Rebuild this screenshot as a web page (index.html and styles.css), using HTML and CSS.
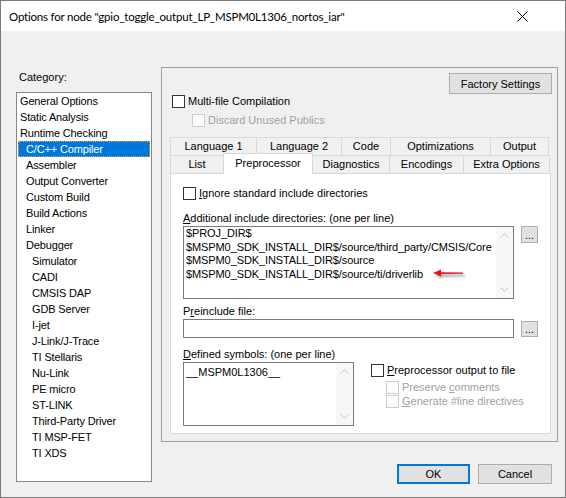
FILE: index.html
```html
<!DOCTYPE html>
<html>
<head>
    <title>Options for node</title>
    <link rel="stylesheet" href="styles.css">
</head>
<body>

<div class="window">
    <div class="titlebar">
        <span class="title">Options for node "gpio_toggle_output_LP_MSPM0L1306_nortos_iar"</span>
        <svg class="close" width="11" height="11" viewBox="0 0 11 11">
            <path d="M0.5 0.5 L10.5 10.5 M10.5 0.5 L0.5 10.5" stroke="#000" stroke-width="1" fill="none"/>
        </svg>
    </div>

    <div class="client">

        <div class="category">
            <div class="cat-label">Category:</div>
            <ul class="listbox">
                <li class="l0">General Options</li>
                <li class="l0">Static Analysis</li>
                <li class="l0">Runtime Checking</li>
                <li class="l1 selected">C/C++ Compiler</li>
                <li class="l1">Assembler</li>
                <li class="l1">Output Converter</li>
                <li class="l1">Custom Build</li>
                <li class="l1">Build Actions</li>
                <li class="l1">Linker</li>
                <li class="l1">Debugger</li>
                <li class="l2">Simulator</li>
                <li class="l2">CADI</li>
                <li class="l2">CMSIS DAP</li>
                <li class="l2">GDB Server</li>
                <li class="l2">I-jet</li>
                <li class="l2">J-Link/J-Trace</li>
                <li class="l2">TI Stellaris</li>
                <li class="l2">Nu-Link</li>
                <li class="l2">PE micro</li>
                <li class="l2">ST-LINK</li>
                <li class="l2">Third-Party Driver</li>
                <li class="l2">TI MSP-FET</li>
                <li class="l2">TI XDS</li>
            </ul>
        </div>

        <div class="right">
            <div class="panel">
                <div class="panel-top">
                    <button class="btn factory">Factory Settings</button>
                </div>

                <div class="check multi"><span class="box"></span>Multi-file Compilation</div>
                <div class="check disabled discard"><span class="box"></span>Discard Unused Publics</div>

                <div class="tabrow back">
                    <div class="tab w-lang1">Language 1</div>
                    <div class="tab w-lang2">Language 2</div>
                    <div class="tab w-code">Code</div>
                    <div class="tab w-opt">Optimizations</div>
                    <div class="tab w-out last">Output</div>
                </div>
                <div class="tabrow front">
                    <div class="tab w-list">List</div>
                    <div class="tab w-pre active">Preprocessor</div>
                    <div class="tab w-diag noleft">Diagnostics</div>
                    <div class="tab w-enc">Encodings</div>
                    <div class="tab w-extra last">Extra Options</div>
                </div>

                <div class="tabpage">
                    <div class="check ignore"><span class="box"></span><span><u>I</u>gnore standard include directories</span></div>

                    <div class="lbl first"><u>A</u>dditional include directories: (one per line)</div>
                    <div class="row">
                        <div class="edit incdirs">
                            <div class="edit-text">
                                <div>$PROJ_DIR$</div>
                                <div>$MSPM0_SDK_INSTALL_DIR$/source/third_party/CMSIS/Core</div>
                                <div>$MSPM0_SDK_INSTALL_DIR$/source</div>
                                <div>$MSPM0_SDK_INSTALL_DIR$/source/ti/driverlib</div>
                            </div>
                            <div class="vscroll">
                                <svg width="9" height="5" viewBox="0 0 9 5"><path d="M0.5 4.5 L4.5 0.8 L8.5 4.5" stroke="#c4c4c4" fill="none"/></svg>
                                <svg width="9" height="5" viewBox="0 0 9 5"><path d="M0.5 0.5 L4.5 4.2 L8.5 0.5" stroke="#c4c4c4" fill="none"/></svg>
                            </div>
                            <svg class="red-arrow" width="38" height="14" viewBox="0 0 38 14">
                                <defs>
                                    <filter id="soft" x="-20%" y="-50%" width="140%" height="200%">
                                        <feGaussianBlur stdDeviation="1"/>
                                    </filter>
                                </defs>
                                <path d="M4 8 L11 5 L11 7 L34 7.5 L34 9.5 L11 10 L11 12 Z" fill="#000" opacity="0.3" filter="url(#soft)"/>
                                <path d="M2 6 L10 2.6 L10 5.2 L32 5.4 L32 6.8 L10 7 L10 9.4 Z" fill="#e8141c"/>
                            </svg>
                        </div>
                        <button class="btn dots">...</button>
                    </div>

                    <div class="lbl pre">P<u>r</u>einclude file:</div>
                    <div class="row center">
                        <div class="edit single"></div>
                        <button class="btn dots small">...</button>
                    </div>

                    <div class="lbl defs"><u>D</u>efined symbols: (one per line)</div>
                    <div class="row">
                        <div class="edit symbols">
                            <div class="edit-text">
                                <div>__MSPM0L1306__</div>
                            </div>
                            <div class="vscroll">
                                <svg width="9" height="5" viewBox="0 0 9 5"><path d="M0.5 4.5 L4.5 0.8 L8.5 4.5" stroke="#c4c4c4" fill="none"/></svg>
                                <svg width="9" height="5" viewBox="0 0 9 5"><path d="M0.5 0.5 L4.5 4.2 L8.5 0.5" stroke="#c4c4c4" fill="none"/></svg>
                            </div>
                        </div>
                        <div class="pp-options">
                            <div class="check pp"><span class="box"></span><span><u>P</u>reprocessor output to file</span></div>
                            <div class="check disabled sub first-sub"><span class="box"></span><span>Preserve <u>c</u>omments</span></div>
                            <div class="check disabled sub"><span class="box"></span><span><u>G</u>enerate #line directives</span></div>
                        </div>
                    </div>
                </div>
            </div>

            <div class="buttons">
                <button class="btn ok">OK</button>
                <button class="btn cancel">Cancel</button>
            </div>
        </div>

    </div>
</div>

</body>
</html>
```

FILE: styles.css
```css
* {
    box-sizing: border-box;
}
html, body {
    margin: 0;
    padding: 0;
    background: #fff;
}
body {
    font-family: "Liberation Sans", Arial, sans-serif;
    font-size: 11px;
    color: #000;
}
u {
    text-decoration: underline;
    text-underline-offset: 1px;
}

.window {
    width: 566px;
    height: 498px;
    border: 1px solid #7a7a7a;
    background: #f0f0f0;
    display: flex;
    flex-direction: column;
}
.titlebar {
    height: 30px;
    flex: none;
    background: #fff;
    display: flex;
    align-items: center;
    padding-left: 8px;
    padding-top: 1px;
}
.title {
    font-family: Lato, "Noto Sans", sans-serif;
    font-size: 11.5px;
    letter-spacing: -0.2px;
    white-space: nowrap;
}
.close {
    margin-left: auto;
    margin-right: 37px;
}

.client {
    flex: 1;
    display: flex;
    padding: 0 7px 0 15px;
}

/* category list */
.category {
    width: 136px;
    margin-top: 40px;
}
.cat-label {
    height: 13px;
    line-height: 13px;
    padding-left: 3px;
    margin-bottom: 8px;
}
.listbox {
    list-style: none;
    margin: 0;
    padding: 0;
    height: 390px;
    background: #fff;
    border: 1px solid #828790;
}
.listbox li {
    height: 16px;
    line-height: 16px;
    margin: 0 1px;
    white-space: nowrap;
    letter-spacing: -0.15px;
}
.listbox .l0 { padding-left: 2px; }
.listbox .l1 { padding-left: 8px; }
.listbox .l2 { padding-left: 14px; }
.listbox .selected {
    background: #0078d7;
    color: #fff;
    outline: 1px dotted #f0a030;
    outline-offset: -1px;
}

/* right side */
.right {
    width: 397px;
    margin-left: 9px;
    margin-top: 36px;
}
.panel {
    height: 375px;
    border: 1px solid #a0a0a0;
    padding: 5px 5px 0 8px;
}
.panel-top {
    display: flex;
    justify-content: flex-end;
}
.btn {
    font-family: "Liberation Sans", Arial, sans-serif;
    font-size: 11px;
    color: #000;
    background: #e1e1e1;
    border: 1px solid #adadad;
    padding: 0;
    margin: 0;
}
.factory {
    width: 103px;
    height: 21px;
}

.check {
    display: flex;
    align-items: center;
    height: 13px;
    line-height: 13px;
    white-space: nowrap;
}
.box {
    width: 13px;
    height: 13px;
    flex: none;
    border: 1px solid #333;
    background: #fff;
    margin-right: 3px;
}
.check.disabled {
    color: #a0a0a0;
}
.check.disabled .box {
    border-color: #cccccc;
    background: #fcfcfc;
}
.multi {
    margin-left: 2px;
    margin-top: 1px;
}
.discard {
    margin-left: 22px;
    margin-top: 6px;
}

/* tabs */
.tabrow {
    display: flex;
    height: 18px;
}
.tabrow.back {
    margin-top: 10px;
}
.tab {
    height: 18px;
    line-height: 17px;
    text-align: center;
    border-top: 1px solid #d9d9d9;
    border-left: 1px solid #d9d9d9;
    background: #f0f0f0;
    white-space: nowrap;
}
.tab.last {
    border-right: 1px solid #d9d9d9;
}
.tab.noleft {
    border-left: none;
}
.tab.active {
    height: 21px;
    margin-top: -2px;
    line-height: 18px;
    border-right: 1px solid #d9d9d9;
    background: #fff;
    position: relative;
    z-index: 1;
}
.w-lang1 { width: 86px; }
.w-lang2 { width: 85px; }
.w-code { width: 49px; }
.w-opt { width: 100px; }
.w-out { width: 59px; }
.w-list { width: 53px; }
.w-pre { width: 90px; }
.w-diag { width: 76px; }
.w-enc { width: 74px; }
.w-extra { width: 87px; }

.tabpage {
    width: 381px;
    height: 261px;
    background: #fff;
    border: 1px solid #d9d9d9;
    padding-left: 12px;
}
.ignore {
    margin-top: 13px;
}
.lbl {
    height: 13px;
    line-height: 13px;
    margin-bottom: 1px;
    white-space: nowrap;
}
.lbl.first { margin-top: 12px; }
.lbl.pre { margin-top: 6px; }
.lbl.defs { margin-top: 10px; }

.row {
    display: flex;
    align-items: flex-start;
}
.row.center {
    align-items: center;
}
.edit {
    background: #fff;
    border: 1px solid #7a7a7a;
    display: flex;
    position: relative;
}
.edit-text {
    flex: 1;
    overflow: hidden;
    white-space: nowrap;
    padding-left: 2px;
    line-height: 13.5px;
}
.incdirs {
    width: 331px;
    height: 73px;
}
.incdirs .edit-text {
    letter-spacing: -0.1px;
}
.single {
    width: 331px;
    height: 19px;
}
.symbols {
    width: 171px;
    height: 64px;
}
.symbols .edit-text {
    padding-top: 3px;
}
.vscroll {
    width: 17px;
    flex: none;
    background: #f7f7f7;
    display: flex;
    flex-direction: column;
    justify-content: space-between;
    align-items: center;
    padding: 6px 0 6px;
}
.dots {
    width: 17px;
    height: 17px;
    margin-left: 7px;
    line-height: 10px;
}
.dots.small {
    height: 16px;
}
.red-arrow {
    position: absolute;
    left: 247px;
    top: 40px;
}

.pp-options {
    margin-left: 17px;
}
.pp {
    margin-top: 2px;
}
.check.sub {
    margin-left: 15px;
    margin-top: 1px;
}
.check.first-sub {
    margin-top: 4px;
}

.buttons {
    display: flex;
    justify-content: flex-end;
    gap: 8px;
    margin-top: 22px;
    padding-right: 6px;
}
.ok {
    width: 73px;
    height: 20px;
    border: 2px solid #0078d7;
}
.cancel {
    width: 74px;
    height: 20px;
}
```
